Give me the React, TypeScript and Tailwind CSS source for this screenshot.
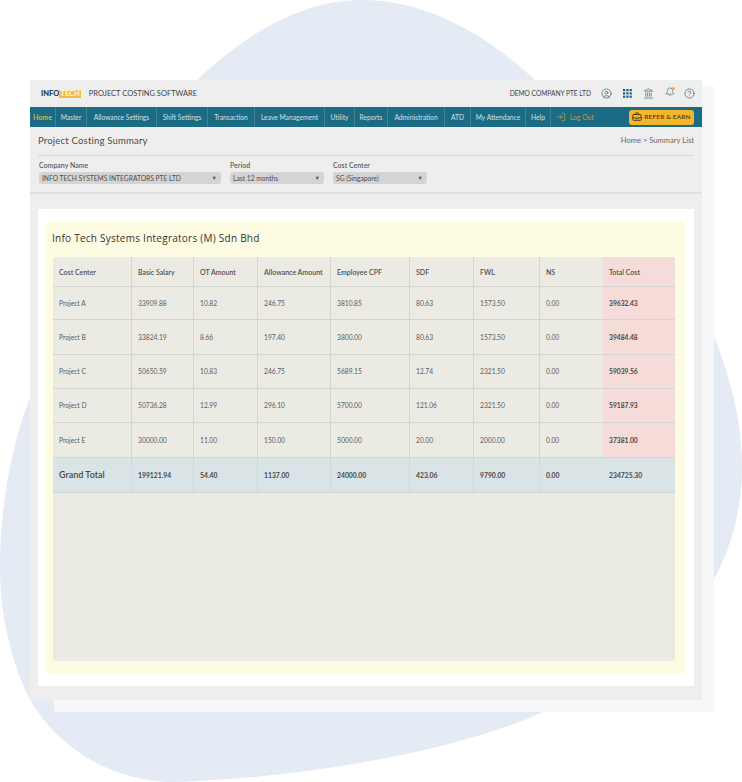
import { Bell, CircleHelp, CircleUser, Landmark, LogIn, BriefcaseBusiness } from "lucide-react";

const navItems = [
  { label: "Home", width: "w-[26px]" },
  { label: "Master", width: "w-[31px]" },
  { label: "Allowance Settings", width: "w-[70px]" },
  { label: "Shift Settings", width: "w-[51px]" },
  { label: "Transaction", width: "w-[47px]" },
  { label: "Leave Management", width: "w-[70px]" },
  { label: "Utility", width: "w-[30px]" },
  { label: "Reports", width: "w-[33px]" },
  { label: "Administration", width: "w-[57px]" },
  { label: "ATD", width: "w-[26px]" },
  { label: "My Attendance", width: "w-[55px]" },
  { label: "Help", width: "w-[25px]" },
];

const headers = ["Cost Center", "Basic Salary", "OT Amount", "Allowance Amount", "Employee CPF", "SDF", "FWL", "NS", "Total Cost"];

const rows = [
  { h: "h-[33px]", cells: ["Project A", "33909.88", "10.82", "246.75", "3810.85", "80.63", "1573.50", "0.00", "39632.43"] },
  { h: "h-[35px]", cells: ["Project B", "33824.19", "8.66", "197.40", "3800.00", "80.63", "1573.50", "0.00", "39484.48"] },
  { h: "h-[34px]", cells: ["Project C", "50650.59", "10.83", "246.75", "5689.15", "12.74", "2321.50", "0.00", "59039.56"] },
  { h: "h-[34px]", cells: ["Project D", "50736.28", "12.99", "296.10", "5700.00", "121.06", "2321.50", "0.00", "59187.93"] },
  { h: "h-[35px]", cells: ["Project E", "30000.00", "11.00", "150.00", "5000.00", "20.00", "2000.00", "0.00", "37381.00"] },
];

const totals = ["Grand Total", "199121.94", "54.40", "1137.00", "24000.00", "423.06", "9790.00", "0.00", "234725.30"];

const colWidths = ["w-[79px]", "w-[62px]", "w-[64px]", "w-[73px]", "w-[79px]", "w-[64px]", "w-[66px]", "w-[63px]", "w-[72px]"];

function SelectPill({ label, value, width }: { label: string; value: string; width: string }) {
  return (
    <div className={width}>
      <div className="text-[7px] leading-[10px] font-semibold text-[#5c5c5c]">{label}</div>
      <div className="mt-[2px] flex h-[12px] items-center justify-between rounded-[3px] bg-[#d4d4d4] pl-[3px] pr-[4px] text-[6.7px] text-[#4c4c4c]">
        <span>{value}</span>
        <span className="text-[5.5px] text-[#555]">▼</span>
      </div>
    </div>
  );
}

function GridIcon() {
  return (
    <svg width="9" height="9" viewBox="0 0 9 9" fill="#1f5f78">
      {[0, 3.3, 6.6].map((y) =>
        [0, 3.3, 6.6].map((x) => <rect key={`${x}-${y}`} x={x} y={y} width="2.2" height="2.2" />)
      )}
    </svg>
  );
}

export default function App() {
  return (
    <div
      className="relative h-[782px] w-[742px] overflow-hidden bg-white text-[#444]"
      style={{ fontFamily: "Lato, 'Open Sans', sans-serif" }}
    >
      {/* Background blob */}
      <svg className="absolute inset-0" width="742" height="782" viewBox="0 0 742 782">
        <path
          d="M362 0 C430 0 490 38 535 80 C620 160 690 260 714 336 C735 390 742 430 742 467 C742 505 733 545 714 579 C670 640 610 680 543 712 C460 750 310 778 173 782 C110 782 60 745 38 712 C15 680 0 620 0 568 C0 510 10 450 30 397 C70 270 130 135 197 80 C245 35 300 0 362 0 Z"
          fill="#e4ebf4"
        />
      </svg>
      <div className="absolute left-[54px] top-[86px] h-[626px] w-[660px] bg-[#f6f7f9]" />

      <main className="relative ml-[30px] mt-[80px] h-[620px] w-[672px] bg-[#eeeeee]">
        {/* Top bar */}
        <header className="flex h-[27px] items-center pl-[11px] pr-[3px]">
          <div className="flex items-center text-[7.5px] font-black leading-[8px]">
            <span className="text-[#27404f]">INFO</span>
            <span className="bg-[#f3bd4e] px-[1px] text-[#fdf3d0]">TECH</span>
          </div>
          <span className="ml-[8px] text-[7.5px] text-[#3f3f3f]">PROJECT COSTING SOFTWARE</span>
          <span className="ml-auto mr-[5px] text-[6.6px] text-[#3f3f3f]">DEMO COMPANY PTE LTD</span>
          <div className="flex items-center text-[#1f5f78]">
            <span className="flex w-[21px] justify-center"><CircleUser size={11} strokeWidth={1.4} /></span>
            <span className="flex w-[21px] justify-center"><GridIcon /></span>
            <span className="flex w-[21px] justify-center"><Landmark size={11} strokeWidth={1.4} /></span>
            <span className="relative -mt-[3px] flex w-[21px] justify-center">
              <Bell size={10} strokeWidth={1.4} />
              <span className="absolute right-[5px] top-0 h-[3px] w-[3px] rounded-full bg-[#f0a92e]" />
            </span>
            <span className="flex w-[19px] justify-center"><CircleHelp size={11} strokeWidth={1.4} /></span>
          </div>
        </header>

        {/* Nav */}
        <nav className="flex h-[20px] items-center bg-[#1c6b85] text-[6.7px] text-[#cfe0e6]">
          {navItems.map((item, i) => (
            <div
              key={item.label}
              className={`flex h-full items-center justify-center border-r border-[#3d8299] whitespace-nowrap ${item.width} ${i === 0 ? "text-[7px] font-semibold text-[#eeb23a]" : ""}`}
            >
              {item.label}
            </div>
          ))}
          <div className="ml-[5px] flex items-center gap-[4px] text-[#b5a04a]">
            <LogIn size={10} strokeWidth={1.5} className="text-[#d8ae3c]" />
            <span>Log Out</span>
          </div>
          <div className="ml-auto mr-[8px] flex h-[15px] w-[65px] items-center justify-center gap-[2px] rounded-[3px] bg-[#f3b42e] text-[6.4px] font-semibold tracking-[0.2px] text-[#4a3a10]">
            <BriefcaseBusiness size={10} strokeWidth={2.2} />
            <span>REFER &amp; EARN</span>
          </div>
        </nav>

        {/* Page heading */}
        <div className="mx-[8px] flex h-[29px] items-center justify-between border-b border-[#d8d8d8]">
          <h1 className="text-[9.5px] tracking-[0.2px] text-[#4a4a4a]">Project Costing Summary</h1>
          <span className="text-[7.6px] text-[#6a6a6a]">Home &gt; Summary List</span>
        </div>

        {/* Filters */}
        <div className="flex h-[38px] gap-[9px] border-b-2 border-[#e0e0e0] pl-[9px] pt-[4px]">
          <SelectPill label="Company Name" value="INFO TECH SYSTEMS INTEGRATORS PTE LTD" width="w-[182px]" />
          <SelectPill label="Period" value="Last 12 months" width="w-[94px]" />
          <SelectPill label="Cost Center" value="SG (Singapore)" width="w-[94px]" />
        </div>

        {/* Report card */}
        <div className="mx-[8px] mt-[15px] h-[477px] w-[656px] bg-white pl-[8px] pt-[13px]">
          <div className="h-[451px] w-[639px] bg-[#fdfce3] pl-[7px] pt-[9px]">
            <h2
              className="-ml-[1px] h-[26px] text-[10px] leading-[14px] tracking-[0.25px] text-[#333]"
              style={{ fontFamily: "'Open Sans', sans-serif" }}
            >
              Info Tech Systems Integrators (M) Sdn Bhd
            </h2>
            <div className="h-[404px] w-[622px] overflow-hidden rounded-[3px] bg-[#ebebe4]">
              <div className="flex h-[30px] border-b border-[#d4d4d0]">
                {headers.map((text, i) => (
                  <div
                    key={text}
                    className={`flex items-center pl-[6px] pt-[1px] text-[7px] font-semibold text-[#505050] ${colWidths[i]} ${i === 8 ? "bg-[#f5dcd8]" : i < 7 ? "border-r border-[#d4d4d0]" : ""}`}
                  >
                    {text}
                  </div>
                ))}
              </div>
              {rows.map((row) => (
                <div key={row.cells[0]} className={`flex border-b border-[#d4d4d0] ${row.h}`}>
                  {row.cells.map((text, i) => (
                    <div
                      key={i}
                      className={`flex items-center pl-[6px] text-[6.7px] ${colWidths[i]} ${i === 8 ? "bg-[#f5dcd8] font-bold text-[#484848]" : "text-[#5c5c5c]"} ${i < 7 ? "border-r border-[#d4d4d0]" : ""}`}
                    >
                      {text}
                    </div>
                  ))}
                </div>
              ))}
              <div className="flex h-[35px] border-b border-[#d0d6d8] bg-[#dae4e6]">
                {totals.map((text, i) => (
                  <div
                    key={text}
                    className={`flex items-center pl-[6px] text-[#484848] ${colWidths[i]} ${i === 0 ? "text-[9px] font-semibold" : "text-[6.8px] font-bold"} ${i < 7 ? "border-r border-dotted border-[#c6cfd2]" : ""}`}
                  >
                    {text}
                  </div>
                ))}
              </div>
            </div>
          </div>
        </div>
      </main>
    </div>
  );
}
